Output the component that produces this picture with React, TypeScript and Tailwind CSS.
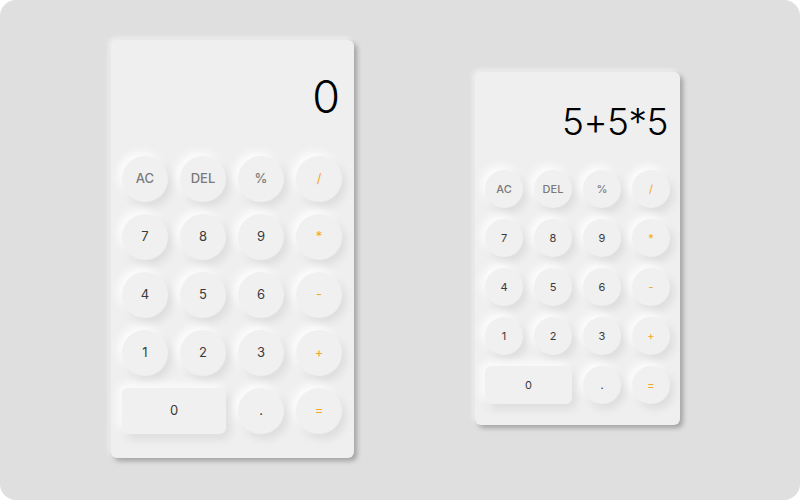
type Key = { label: string; kind: 'fn' | 'num' | 'op'; wide?: boolean }

const keys: Key[] = [
  { label: 'AC', kind: 'fn' },
  { label: 'DEL', kind: 'fn' },
  { label: '%', kind: 'fn' },
  { label: '/', kind: 'op' },
  { label: '7', kind: 'num' },
  { label: '8', kind: 'num' },
  { label: '9', kind: 'num' },
  { label: '*', kind: 'op' },
  { label: '4', kind: 'num' },
  { label: '5', kind: 'num' },
  { label: '6', kind: 'num' },
  { label: '-', kind: 'op' },
  { label: '1', kind: 'num' },
  { label: '2', kind: 'num' },
  { label: '3', kind: 'num' },
  { label: '+', kind: 'op' },
  { label: '0', kind: 'num', wide: true },
  { label: '.', kind: 'num' },
  { label: '=', kind: 'op' },
]

const tone = {
  fn: 'text-[#7a7a7a] font-medium',
  num: 'text-[#3a3a3a]',
  op: 'text-[#f5a623]',
}

const keyShadow =
  'shadow-[4px_5px_10px_rgba(0,0,0,0.08),-4px_-4px_10px_rgba(255,255,255,0.9)]'

function Keypad({ small }: { small?: boolean }) {
  return (
    <div
      className={
        small
          ? 'grid grid-cols-[repeat(4,38px)] auto-rows-[38px] gap-[11px]'
          : 'grid grid-cols-[repeat(4,46px)] auto-rows-[46px] gap-[12px]'
      }
    >
      {keys.map((k) => (
        <button
          key={k.label}
          className={[
            'flex items-center justify-center bg-[#f0f0f0]',
            keyShadow,
            k.wide ? 'col-span-2 rounded-[6px]' : 'rounded-full',
            small ? 'text-[11px]' : 'text-[13px]',
            tone[k.kind],
          ].join(' ')}
        >
          {k.label}
        </button>
      ))}
    </div>
  )
}

function Calculator({ value, small }: { value: string; small?: boolean }) {
  return (
    <div
      className={
        small
          ? 'flex flex-col w-[205px] h-[353px] rounded-[6px] bg-[#efefef] pl-[10px] pr-[11px] shadow-[3px_3px_5px_rgba(0,0,0,0.28),-2px_-2px_5px_rgba(255,255,255,0.6)]'
          : 'flex flex-col w-[243px] h-[418px] rounded-[6px] bg-[#efefef] pl-[11px] pr-[12px] shadow-[3px_3px_5px_rgba(0,0,0,0.28),-2px_-2px_5px_rgba(255,255,255,0.6)]'
      }
    >
      <div
        className={
          small
            ? 'h-[98px] flex items-center justify-end pr-[1px] text-[37px] font-light text-black leading-none tracking-[-0.5px]'
            : 'h-[116px] flex items-center justify-end pr-[2px] pb-[2px] text-[45px] font-light text-black leading-none'
        }
      >
        {value}
      </div>
      <Keypad small={small} />
    </div>
  )
}

export default function App() {
  return (
    <div className="bg-white w-[800px] h-[500px]" style={{ fontFamily: 'Inter, "Open Sans", sans-serif' }}>
      <div className="w-full h-full rounded-2xl bg-[#dfdfdf] flex items-center pl-[111px] pb-[3px] gap-[121px]">
        <Calculator value="0" />
        <Calculator value="5+5*5" small />
      </div>
    </div>
  )
}
